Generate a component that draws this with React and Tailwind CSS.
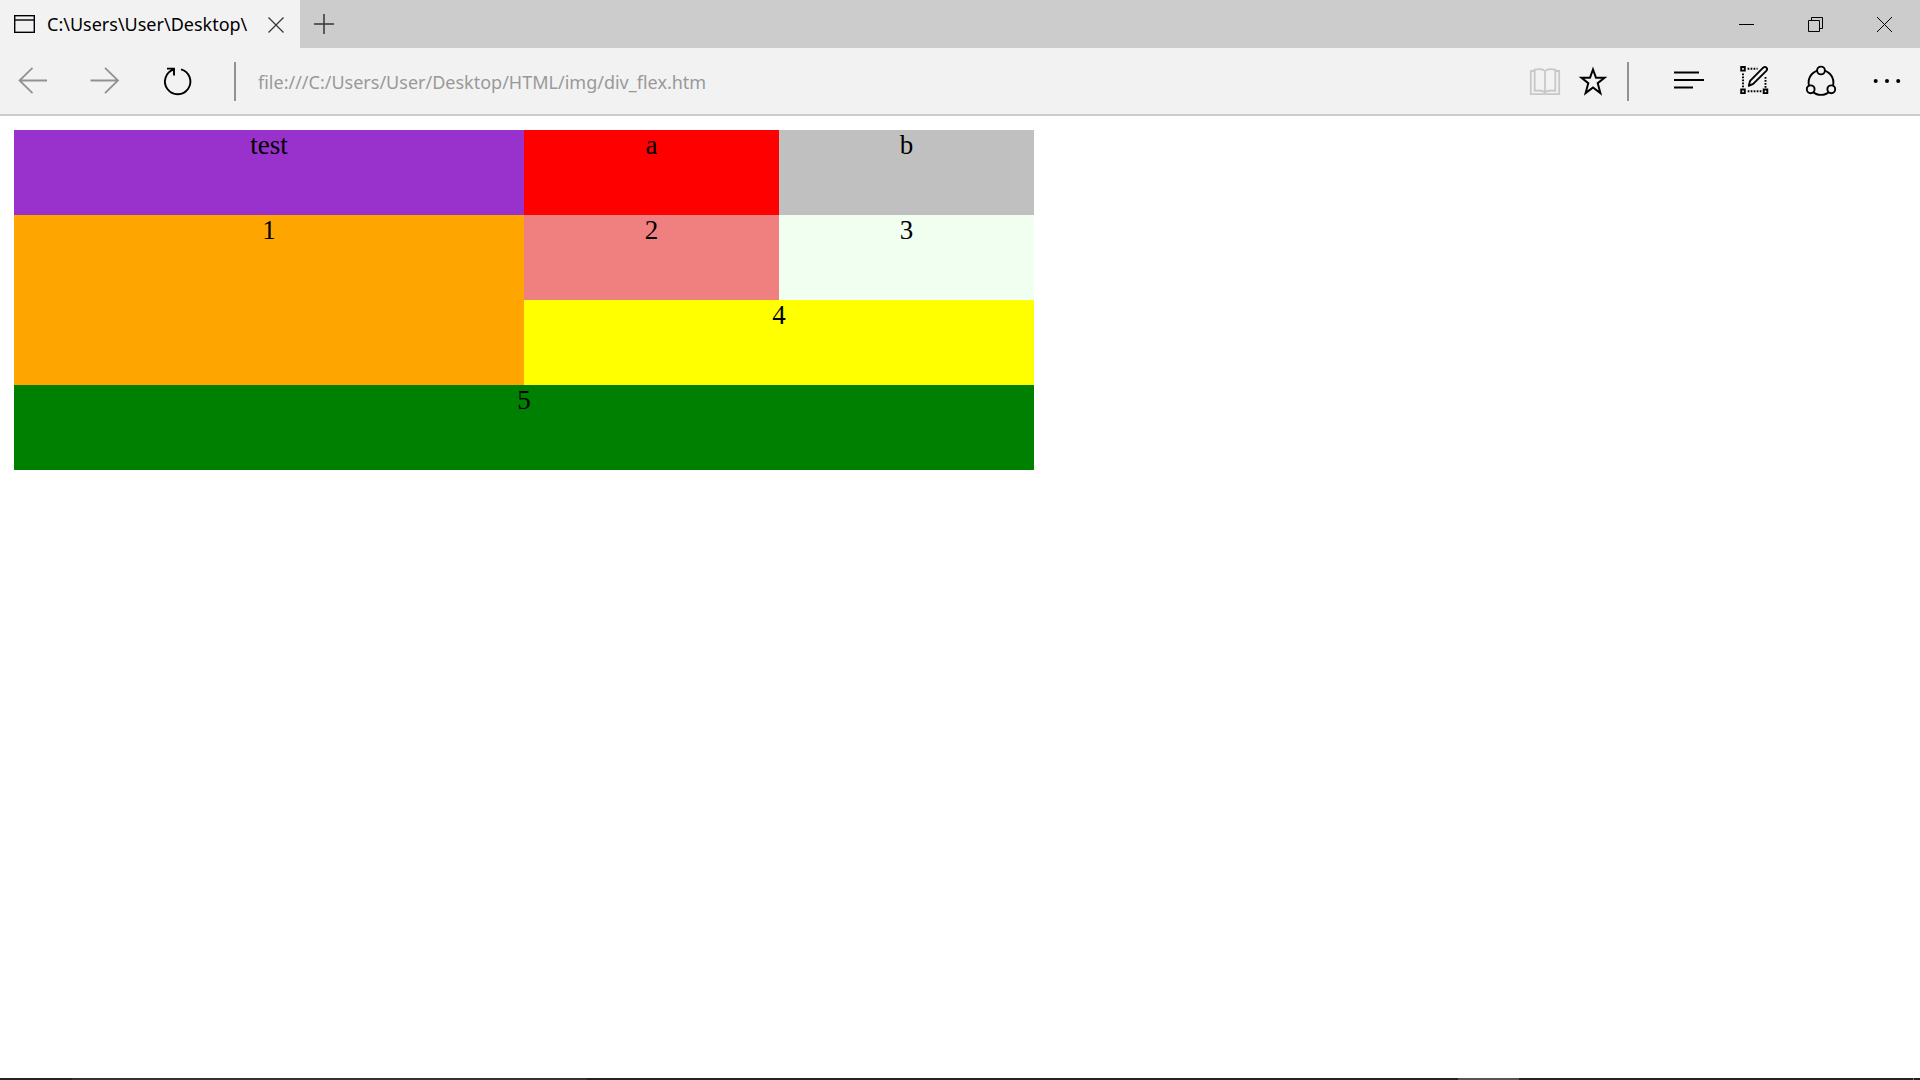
function Icon({ children, className = "" }) {
  return (
    <svg
      viewBox="0 0 32 32"
      fill="none"
      stroke="currentColor"
      aria-hidden="true"
      className={`size-8 shrink-0 ${className}`}
    >
      {children}
    </svg>
  );
}

function ToolButton({ label, width, children }) {
  return (
    <button
      type="button"
      aria-label={label}
      className={`flex h-full shrink-0 items-center justify-center ${width}`}
    >
      {children}
    </button>
  );
}

function TabStrip() {
  return (
    <header className="flex h-12 items-stretch bg-[#cccccc]">
      <div className="flex w-[300px] shrink-0 items-center bg-[#f2f2f2] pl-3.5">
        <svg viewBox="0 0 21 18" fill="none" stroke="black" strokeWidth="1.4" aria-hidden="true" className="h-[18px] w-[21px] shrink-0">
          <rect x="0.7" y="0.7" width="19.6" height="16.6" />
          <path d="M1 5h19" />
        </svg>
        <span className="ml-3 w-[209px] shrink-0 text-[18px] leading-6 whitespace-nowrap">
          C:\Users\User\Desktop\
        </span>
        <button type="button" aria-label="Close tab" className="ml-3 flex size-4 items-center justify-center">
          <svg viewBox="0 0 16 16" fill="none" stroke="#333333" strokeWidth="1.2" aria-hidden="true" className="mt-0.5 size-4 shrink-0">
            <path d="M.5.5l15 15M15.5.5l-15 15" />
          </svg>
        </button>
      </div>
      <ToolButton label="New tab" width="w-12">
        <svg viewBox="0 0 20 20" fill="none" stroke="#333333" strokeWidth="1.5" aria-hidden="true" className="size-5">
          <path d="M10 0v20M0 10h20" />
        </svg>
      </ToolButton>
      <div className="ml-auto flex pr-px">
        <ToolButton label="Minimize" width="w-[69px]">
          <svg viewBox="0 0 15 15" stroke="black" aria-hidden="true" className="size-[15px]">
            <path d="M0 7.5h15" />
          </svg>
        </ToolButton>
        <ToolButton label="Restore" width="w-[69px]">
          <svg viewBox="0 0 15 15" fill="none" stroke="black" aria-hidden="true" className="size-[15px]">
            <path d="M.5 3.5h11v11H.5zM3.5 3.5v-3h11v11h-3" />
          </svg>
        </ToolButton>
        <ToolButton label="Close" width="w-[69px]">
          <svg viewBox="0 0 15 15" fill="none" stroke="black" aria-hidden="true" className="size-[15px]">
            <path d="M0 0l15 15M15 0L0 15" />
          </svg>
        </ToolButton>
      </div>
    </header>
  );
}

function Toolbar() {
  return (
    <nav className="flex h-[68px] items-center border-b-2 border-[#cccccc] bg-[#f2f2f2]">
      <ToolButton label="Back" width="w-[66px]">
        <Icon className="text-[#929292]">
          <path strokeWidth="1.8" d="M30 15.5H2.5M15.5 2.8L2.5 15.5l13 12.7" />
        </Icon>
      </ToolButton>
      <ToolButton label="Forward" width="w-[77px]">
        <Icon className="text-[#929292]">
          <path strokeWidth="1.8" d="M1.500 15.5H29M16 2.8l13 12.7-13 12.7" />
        </Icon>
      </ToolButton>
      <ToolButton label="Refresh" width="w-[69px]">
        <Icon>
          <path strokeWidth="1.9" d="M19 4.300a12.700 12.700 0 1 1-7 .1M5 3.600h7v6.900" />
        </Icon>
      </ToolButton>
      <div className="ml-[22px] h-[39px] w-0.5 shrink-0 bg-[#929292]" />
      <input
        aria-label="Address"
        defaultValue="file:///C:/Users/User/Desktop/HTML/img/div_flex.htm"
        className="ml-[22px] h-8 min-w-0 flex-1 bg-transparent pt-0.5 text-[18px] text-[#999999] outline-none"
      />
      <ToolButton label="Reading view" width="w-12">
        <Icon className="text-[#c8c8c8]">
          <g strokeWidth="1.8">
            <path d="M5.7 6H1.8v23.2h28.4V6h-3.9" />
            <path d="M16 6c-2-2.200-6-2.200-10.300-1.400v21.200c4-.6 8-.4 10.300 1.500 2.300-1.900 6.300-2.100 10.300-1.500V4.600C22 3.800 18 3.800 16 6zM16 6v23" />
          </g>
        </Icon>
      </ToolButton>
      <ToolButton label="Add to favorites" width="w-12">
        <Icon>
          <path
            strokeWidth="2"
            d="M16 4.500l3 8.300h8.500l-6.800 5.400 2.700 9.900-7.400-5.700-7.400 5.700 2.700-9.900-6.800-5.400H13z"
          />
        </Icon>
      </ToolButton>
      <div className="mr-[27px] ml-2.5 h-[39px] w-0.5 shrink-0 bg-[#929292]" />
      <ToolButton label="Hub" width="w-[66px]">
        <Icon>
          <path strokeWidth="2" d="M1 7.500h25M1 15h30M1 22.500h19" />
        </Icon>
      </ToolButton>
      <ToolButton label="Make a web note" width="w-[66px]">
        <Icon>
          <g strokeWidth="1.9">
            <path d="M2.200 2h3.600v3.600H2.200zM2.200 24.500h3.600v3.600H2.200zM24.700 24.500h3.600v3.600h-3.600z" />
            <path strokeDasharray="1.700 1.300" d="M8.600 3.800h10M8.700 26.300h14.500M4 8.600v14.500M26.500 12v11" />
            <path strokeLinejoin="round" d="M9.800 20.800l1.300-5L24.200 2.700c2.400-2.100 5.200.7 3.100 3.100L14.200 18.900z" />
          </g>
        </Icon>
      </ToolButton>
      <ToolButton label="Share" width="w-[66px]">
        <Icon>
          <g strokeWidth="1.9">
            <circle cx="16" cy="17.500" r="12.400" />
            <circle cx="16" cy="5.500" r="3.900" className="fill-[#f2f2f2]" />
            <circle cx="5.700" cy="24.300" r="3.900" className="fill-[#f2f2f2]" />
            <circle cx="26.300" cy="24.300" r="3.900" className="fill-[#f2f2f2]" />
          </g>
        </Icon>
      </ToolButton>
      <ToolButton label="More actions" width="w-[66px]">
        <Icon>
          <g fill="currentColor" stroke="none">
            <circle cx="4.700" cy="16" r="2" />
            <circle cx="16" cy="16" r="2" />
            <circle cx="27.200" cy="16" r="2" />
          </g>
        </Icon>
      </ToolButton>
    </nav>
  );
}

const cells = [
  { text: "test", style: "col-span-2 bg-[#9932cc]" },
  { text: "a", style: "bg-[#ff0000]" },
  { text: "b", style: "bg-[#c0c0c0]" },
  { text: "1", style: "col-span-2 row-span-2 bg-[#ffa500]" },
  { text: "2", style: "bg-[#f08080]" },
  { text: "3", style: "bg-[#f0fff0]" },
  { text: "4", style: "col-span-2 bg-[#ffff00]" },
  { text: "5", style: "col-span-4 bg-[#008000]" },
];

export default function App() {
  return (
    <div className="flex min-h-screen flex-col bg-white font-['Noto_Sans',sans-serif] text-black">
      <TabStrip />
      <Toolbar />
      <main className="flex-1 p-3.5">
        <div className="grid w-[1020px] max-w-full auto-rows-[85px] grid-cols-4 text-center font-['Liberation_Serif',serif] text-[27px] leading-[30px]">
          {cells.map((cell) => (
            <div key={cell.text} className={cell.style}>
              {cell.text}
            </div>
          ))}
        </div>
      </main>
      <footer className="flex h-0.5 bg-[#222222]">
        <div className="ml-[72px] w-[515px] bg-[#333333]" />
        <div className="mr-[394px] ml-auto w-[61px] bg-[#555555]" />
        <div className="mr-1.5 w-px bg-[#777777]" />
      </footer>
    </div>
  );
}
